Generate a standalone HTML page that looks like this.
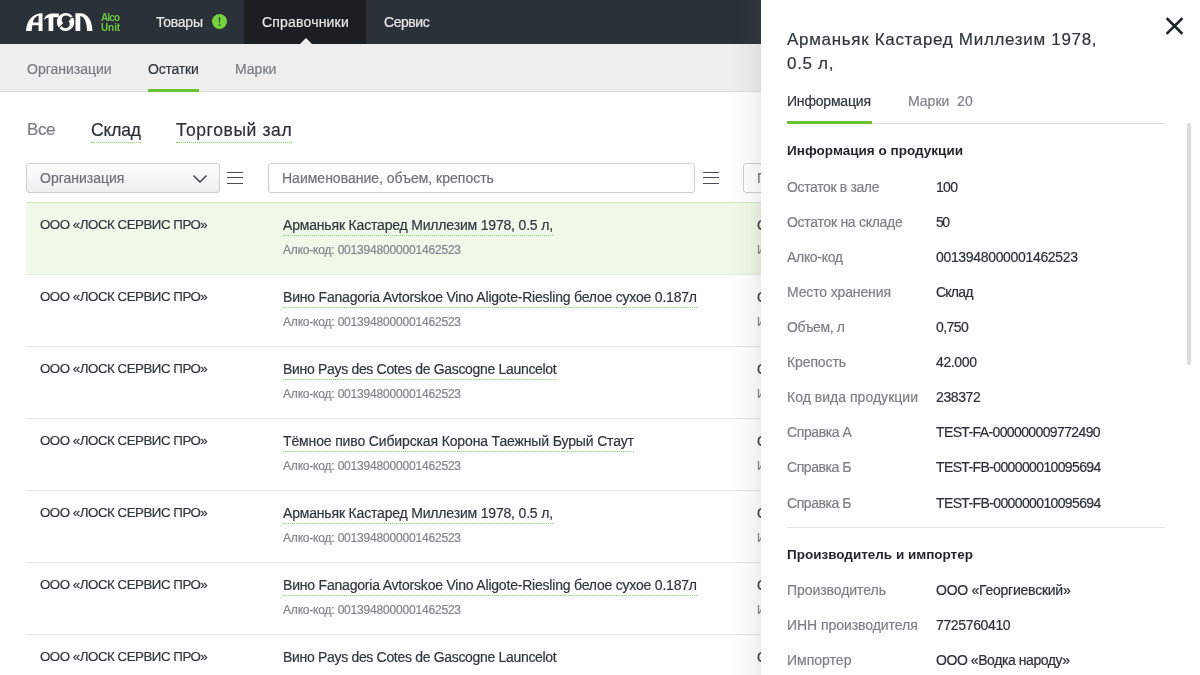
<!DOCTYPE html>
<html><head><meta charset="utf-8">
<style>
*{box-sizing:border-box;margin:0;padding:0}
html,body{width:1200px;height:675px;overflow:hidden;background:#fff;font-family:"Liberation Sans",sans-serif;color:#30363b;-webkit-text-stroke:0.2px}
.abs{position:absolute;white-space:nowrap}
#hdr{position:absolute;left:0;top:0;width:1200px;height:44px;background:#2a3138}
#hdr .act{position:absolute;left:244px;top:0;width:122px;height:44px;background:#1b1f22}
#hdr .tri{position:absolute;left:300px;top:38px;width:0;height:0;border-left:6px solid transparent;border-right:6px solid transparent;border-bottom:6px solid #eeeeee}
.nav{position:absolute;top:13px;font-size:14px;color:#e8e8e8;line-height:18px}
.badge{position:absolute;left:212px;top:14px;width:15px;height:15px;border-radius:50%;background:#76d13f}
#sub{position:absolute;left:0;top:44px;width:1200px;height:48px;background:#eeeeee;border-bottom:1px solid #dadada}
.sn{position:absolute;top:16px;font-size:14px;color:#7a7d80;line-height:18px}
.tabs{position:absolute;top:119px;font-size:17.5px;line-height:22px;color:#2b3136}
.dot{border-bottom:1px dotted #7ccf52;padding-bottom:2px}
.sel{position:absolute;left:26px;top:163px;width:194px;height:30px;border:1px solid #cfcfcf;border-radius:3px;background:linear-gradient(#fdfdfd,#efefef)}
.inp{position:absolute;top:163px;height:30px;border:1px solid #cfcfcf;border-radius:3px;background:#fff}
.ph{position:absolute;top:6px;font-size:14px;color:#6e7175;line-height:17px}
.ham{position:absolute;width:16px;height:14px}
.ham i{position:absolute;left:0;width:16px;height:1.3px;background:#474d52}
.row{position:absolute;left:26px;width:1174px;height:72px;border-bottom:1px solid #e6e6e6}
.row.hl{background:#f0f9e9;border-top:1px solid #d0edbd}
.c1{position:absolute;left:14px;top:14.2px;font-size:13.3px;color:#30373c;line-height:16px}
.c2{position:absolute;left:257px;top:14px;font-size:14px;color:#30373c;line-height:16px}
.c2 span{border-bottom:1px dotted #8ad167;padding-bottom:2px}
.c2b{position:absolute;left:257px;top:40px;font-size:12px;color:#808488;line-height:14px}
.c3{position:absolute;left:731px;top:14px;font-size:14px;color:#30373c;line-height:16px}
.c3b{position:absolute;left:731px;top:40px;font-size:12px;color:#808488;line-height:14px}
#panel{position:absolute;left:761px;top:0;width:439px;height:675px;background:#fff}
#shd{position:absolute;left:733px;top:0;width:28px;height:675px;background:linear-gradient(to right,rgba(108,108,108,0) 0%,rgba(108,108,108,0.025) 35%,rgba(108,108,108,0.06) 65%,rgba(108,108,108,0.125) 100%)}
.ttl{position:absolute;left:26px;top:28px;font-size:17px;letter-spacing:0.68px;line-height:24px;color:#30363b}
.ptab{position:absolute;top:92px;font-size:14px;line-height:18px}
.pline{position:absolute;left:26px;top:123px;width:378px;height:1px;background:#dedede}
.pgreen{position:absolute;left:26px;top:121px;width:85px;height:3px;background:#68c234}
.h{position:absolute;left:26px;font-size:13.5px;font-weight:bold;color:#1f2428;line-height:16px;-webkit-text-stroke:0}
.lb{position:absolute;left:26px;font-size:14px;color:#7c8084;line-height:16px}
.vl{position:absolute;left:175px;font-size:14px;color:#2b3136;line-height:16px}
.div{position:absolute;left:26px;top:527px;width:378px;height:1px;background:#e3e3e3}
.sb{position:absolute;left:426px;top:123px;width:4px;height:242px;border-radius:2px;background:#dcdcde}
</style></head>
<body>
<div id="wrap" style="position:absolute;left:0;top:0;width:1200px;height:675px;will-change:transform">
<div id="hdr">
  <svg class="abs" style="left:0;top:0;-webkit-text-stroke:0" width="130" height="44" viewBox="0 0 130 44">
    <g fill="#ffffff">
      <!-- A -->
      <path d="M26,31 C26.5,21 32,13.2 42.5,13.2 L42.5,31 L38.6,31 L38.6,25.3 L32.3,25.3 L31.6,31 Z M32.8,22.6 L38.6,22.6 L38.6,15.6 C35.5,16.3 33.6,19 32.8,22.6 Z" fill-rule="evenodd"/>
      <!-- T -->
      <path d="M43.8,20 C45,15 49,13.4 53,13.4 L59,13.4 L58.5,17.3 L53.3,17.3 L53.3,31 L48.6,31 L48.6,17.6 C46.5,18 45,19 43.8,20 Z"/>
      <!-- O -->
      <path d="M65.6,13.1 C70.4,13.1 74.3,17.1 74.3,22 C74.3,26.9 70.4,30.9 65.6,30.9 C60.8,30.9 56.9,26.9 56.9,22 C56.9,17.1 60.8,13.1 65.6,13.1 Z M66,15.4 C68.5,15.4 70.5,16.8 70.6,18.6 C70.6,20 69.5,20.6 68.6,21.2 C69.6,22.2 70,23.5 69.6,25 C69.2,27 67.6,28.2 65.6,28.2 C63.5,28.2 62,27.2 61.8,25.5 C61.8,24.2 62.6,23.4 63.2,23 C62.2,22 61.6,20.6 61.7,19.4 C61.9,17 63.6,15.4 66,15.4 Z" fill-rule="evenodd"/>
      <path d="M58.6,27.4 L62.4,24 L62.9,24.8 L59.4,28.2 Z M70.2,17.6 L73.2,16.6 L73.5,17.6 L70.5,18.6 Z" fill="#2a3138"/>
      <!-- N -->
      <path d="M75.5,31 L75.5,13.2 L80.5,13.2 C87,13.2 92.4,20 92.4,31 L87,31 C87,23 84.5,16.3 80.3,16 L80.3,31 Z"/>
    </g>
    <text x="101" y="20.5" font-family="Liberation Sans" font-weight="bold" font-size="10" letter-spacing="-0.85" fill="#6cc541">Alco</text>
    <text x="101" y="31" font-family="Liberation Sans" font-weight="bold" font-size="10" letter-spacing="-0.1" fill="#6cc541">Unit</text>
  </svg>
  <div class="nav" style="left:156px;letter-spacing:-0.24px">Товары</div>
  <div class="badge"><svg width="15" height="15" viewBox="0 0 15 15" style="position:absolute;left:0;top:0"><path d="M6.6,3.2 L8.4,3.2 L7.9,9.3 L7.1,9.3 Z" fill="#3b5a33"/><circle cx="7.5" cy="11" r="1" fill="#3b5a33"/></svg></div>
  <div class="act"></div>
  <div class="nav" style="left:262px;letter-spacing:0.19px">Справочники</div>
  <div class="nav" style="left:384px;letter-spacing:-0.45px">Сервис</div>
  <div class="tri"></div>
</div>
<div id="sub">
  <div class="sn" style="left:27px">Организации</div>
  <div class="sn" style="left:148px;color:#32383d;letter-spacing:-0.2px">Остатки</div>
  <div class="sn" style="left:235px">Марки</div>
  <div class="abs" style="left:148px;top:45px;width:51px;height:3px;background:#68c234"></div>
</div>
<div class="tabs" style="left:27px;color:#7a7d80;font-size:17px;letter-spacing:-0.4px">Все</div>
<div class="tabs" style="left:91px;letter-spacing:-0.15px"><span class="dot">Склад</span></div>
<div class="tabs" style="left:176px;letter-spacing:0.6px"><span class="dot">Торговый зал</span></div>

<div class="sel"><div class="ph" style="left:13px">Организация</div><svg style="position:absolute;left:165px;top:10px" width="16" height="10" viewBox="0 0 16 10"><path d="M1.5,1.5 L8,8 L14.5,1.5" fill="none" stroke="#30363b" stroke-width="1.4"/></svg></div>
<div class="ham" style="left:227px;top:171px"><i style="top:0.5px"></i><i style="top:6.2px"></i><i style="top:12px"></i></div>
<div class="ham" style="left:703px;top:171px"><i style="top:0.5px"></i><i style="top:6.2px"></i><i style="top:12px"></i></div>
<div class="inp" style="left:268px;width:427px"><div class="ph" style="left:13px">Наименование, объем, крепость</div></div>
<div class="inp" style="left:743px;width:200px"><div class="ph" style="left:13px">Поиск</div></div>

<div class="row hl" style="top:202px;height:73px"><div class="c1" style="letter-spacing:-0.47px">ООО «ЛОСК СЕРВИС ПРО»</div><div class="c2" style="letter-spacing:-0.179px"><span>Арманьяк Кастаред Миллезим 1978, 0.5 л,</span></div><div class="c2b" style="letter-spacing:-0.189px">Алко-код: 0013948000001462523</div><div class="c3">Склад</div><div class="c3b">Из ЕГАИС</div></div>
<div class="row" style="top:275px;height:72px"><div class="c1" style="letter-spacing:-0.47px">ООО «ЛОСК СЕРВИС ПРО»</div><div class="c2" style="letter-spacing:-0.205px"><span>Вино Fanagoria Avtorskoe Vino Aligote-Riesling белое сухое 0.187л</span></div><div class="c2b" style="letter-spacing:-0.189px">Алко-код: 0013948000001462523</div><div class="c3">Склад</div><div class="c3b">Из ЕГАИС</div></div>
<div class="row" style="top:347px;height:72px"><div class="c1" style="letter-spacing:-0.47px">ООО «ЛОСК СЕРВИС ПРО»</div><div class="c2" style="letter-spacing:-0.317px"><span>Вино Pays des Cotes de Gascogne Launcelot</span></div><div class="c2b" style="letter-spacing:-0.189px">Алко-код: 0013948000001462523</div><div class="c3">Склад</div><div class="c3b">Из ЕГАИС</div></div>
<div class="row" style="top:419px;height:72px"><div class="c1" style="letter-spacing:-0.47px">ООО «ЛОСК СЕРВИС ПРО»</div><div class="c2" style="letter-spacing:-0.14px"><span>Тёмное пиво Сибирская Корона Таежный Бурый Стаут</span></div><div class="c2b" style="letter-spacing:-0.189px">Алко-код: 0013948000001462523</div><div class="c3">Склад</div><div class="c3b">Из ЕГАИС</div></div>
<div class="row" style="top:491px;height:72px"><div class="c1" style="letter-spacing:-0.47px">ООО «ЛОСК СЕРВИС ПРО»</div><div class="c2" style="letter-spacing:-0.179px"><span>Арманьяк Кастаред Миллезим 1978, 0.5 л,</span></div><div class="c2b" style="letter-spacing:-0.189px">Алко-код: 0013948000001462523</div><div class="c3">Склад</div><div class="c3b">Из ЕГАИС</div></div>
<div class="row" style="top:563px;height:72px"><div class="c1" style="letter-spacing:-0.47px">ООО «ЛОСК СЕРВИС ПРО»</div><div class="c2" style="letter-spacing:-0.205px"><span>Вино Fanagoria Avtorskoe Vino Aligote-Riesling белое сухое 0.187л</span></div><div class="c2b" style="letter-spacing:-0.189px">Алко-код: 0013948000001462523</div><div class="c3">Склад</div><div class="c3b">Из ЕГАИС</div></div>
<div class="row" style="top:635px;height:72px"><div class="c1" style="letter-spacing:-0.47px">ООО «ЛОСК СЕРВИС ПРО»</div><div class="c2" style="letter-spacing:-0.317px"><span style="border:0">Вино Pays des Cotes de Gascogne Launcelot</span></div><div class="c2b" style="letter-spacing:-0.189px">Алко-код: 0013948000001462523</div><div class="c3">Склад</div><div class="c3b">Из ЕГАИС</div></div>

<div id="shd"></div>
<div id="panel">
  <div class="ttl">Арманьяк Кастаред Миллезим 1978,<br>0.5 л,</div>
  <div class="ptab" style="left:26px;color:#30363b;letter-spacing:-0.19px">Информация</div>
  <div class="ptab" style="left:147px;color:#808488">Марки&nbsp;&nbsp;20</div>
  <div class="pline"></div>
  <div class="pgreen"></div>
  <div class="h" style="top:143px;letter-spacing:0.014px">Информация о продукции</div>
  <div class="lb" style="top:178.6px;letter-spacing:-0.362px">Остаток в зале</div><div class="vl" style="top:178.6px;letter-spacing:-0.7px">100</div>
  <div class="lb" style="top:213.7px;letter-spacing:-0.287px">Остаток на складе</div><div class="vl" style="top:213.7px;letter-spacing:-1.6px">50</div>
  <div class="lb" style="top:248.8px;letter-spacing:-0.314px">Алко-код</div><div class="vl" style="top:248.8px;letter-spacing:-0.328px">0013948000001462523</div>
  <div class="lb" style="top:283.9px;letter-spacing:-0.138px">Место хранения</div><div class="vl" style="top:283.9px;letter-spacing:-0.775px">Склад</div>
  <div class="lb" style="top:319.0px;letter-spacing:-0.371px">Объем, л</div><div class="vl" style="top:319.0px;letter-spacing:-0.575px">0,750</div>
  <div class="lb" style="top:354.1px;letter-spacing:-0.114px">Крепость</div><div class="vl" style="top:354.1px;letter-spacing:-0.38px">42.000</div>
  <div class="lb" style="top:389.2px;letter-spacing:0.024px">Код вида продукции</div><div class="vl" style="top:389.2px;letter-spacing:-0.38px">238372</div>
  <div class="lb" style="top:424.3px;letter-spacing:-0.4px">Справка А</div><div class="vl" style="top:424.3px;letter-spacing:-0.618px">TEST-FA-000000009772490</div>
  <div class="lb" style="top:459.4px;letter-spacing:-0.438px">Справка Б</div><div class="vl" style="top:459.4px;letter-spacing:-0.623px">TEST-FB-000000010095694</div>
  <div class="lb" style="top:494.5px;letter-spacing:-0.438px">Справка Б</div><div class="vl" style="top:494.5px;letter-spacing:-0.623px">TEST-FB-000000010095694</div>
  <div class="div"></div>
  <div class="h" style="top:547px;letter-spacing:-0.009px">Производитель и импортер</div>
  <div class="lb" style="top:582px;letter-spacing:-0.058px">Производитель</div><div class="vl" style="top:582px;letter-spacing:-0.247px">ООО «Георгиевский»</div>
  <div class="lb" style="top:617px;letter-spacing:-0.056px">ИНН производителя</div><div class="vl" style="top:617px;letter-spacing:-0.356px">7725760410</div>
  <div class="lb" style="top:652px;letter-spacing:0.014px">Импортер</div><div class="vl" style="top:652px;letter-spacing:-0.429px">ООО «Водка народу»</div>
  <div class="sb"></div>
  <svg style="position:absolute;left:400.5px;top:14.3px" width="26" height="26" viewBox="0 0 26 26"><path d="M5.5,5 L19.5,19 M19.5,5 L5.5,19" stroke="#1f2429" stroke-width="2.6" stroke-linecap="square"/></svg>
</div>
</div>
</body></html>
